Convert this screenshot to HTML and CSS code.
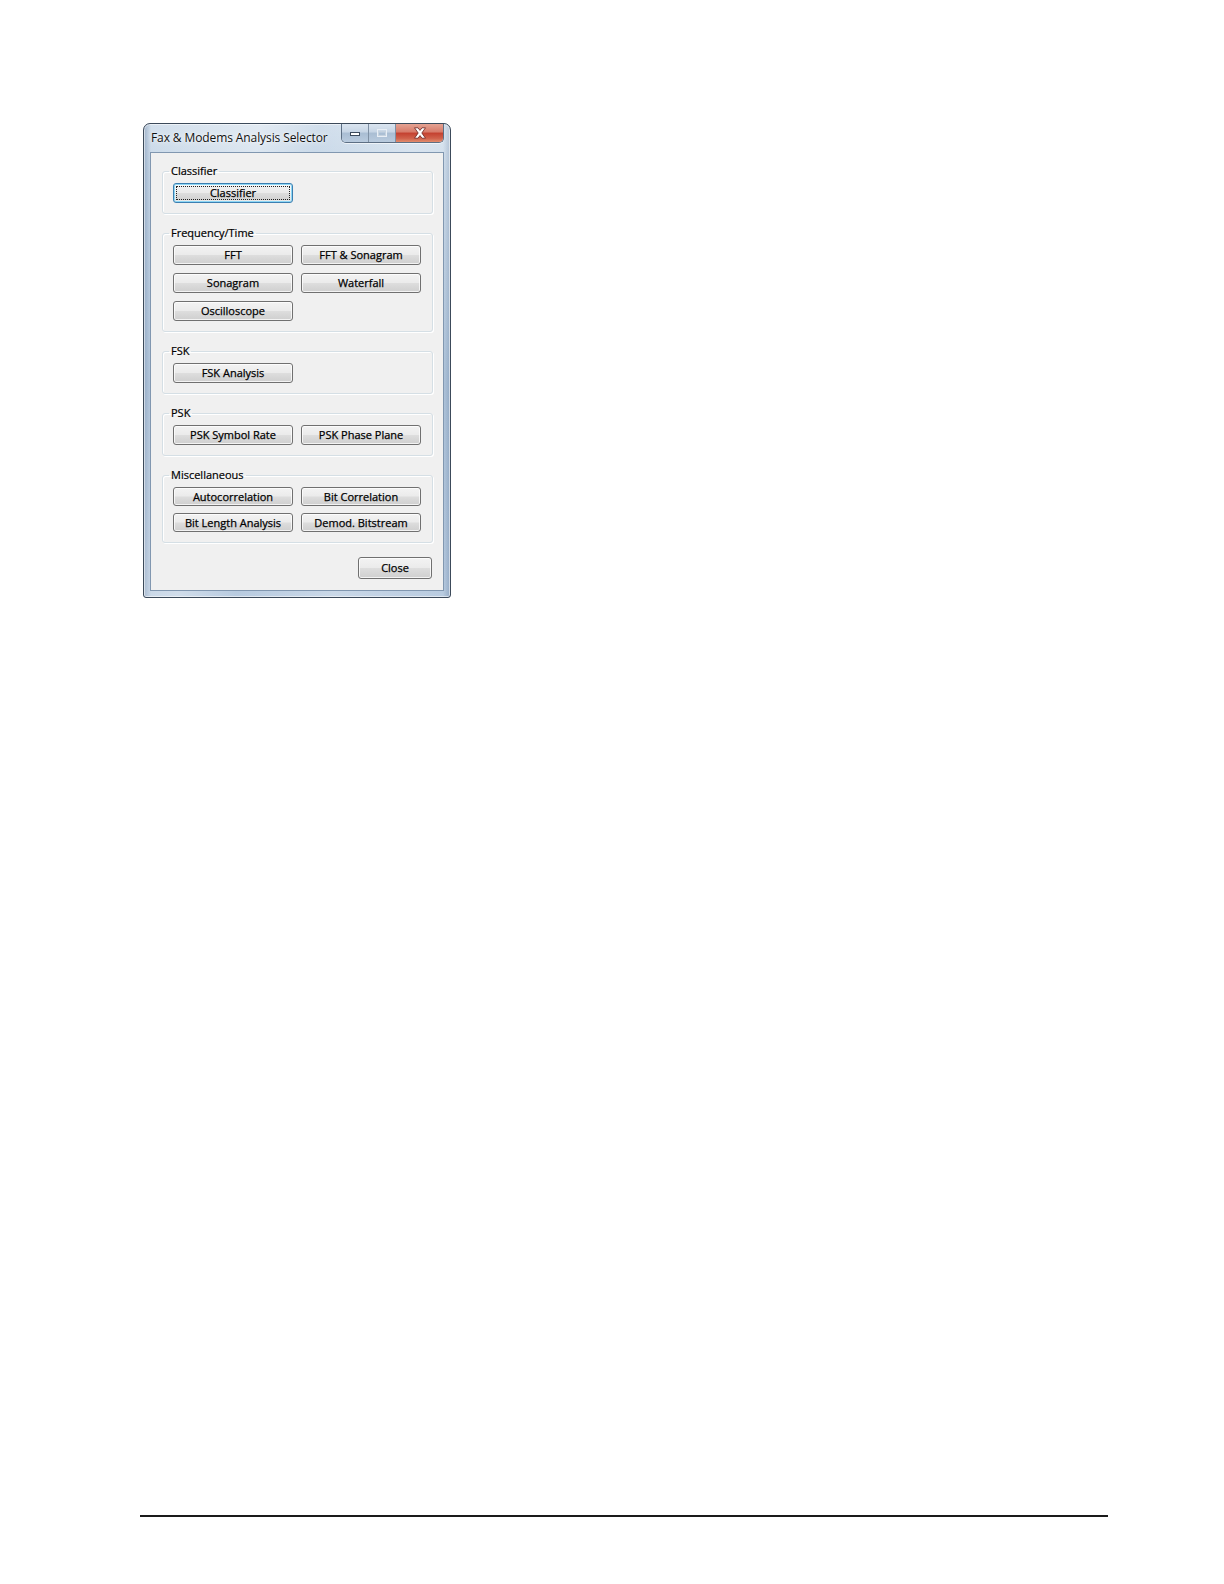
FILE: index.html
```html
<!DOCTYPE html>
<html>
<head>
<meta charset="utf-8">
<title>Fax &amp; Modems Analysis Selector</title>
<link rel="stylesheet" href="styles.css">
</head>
<body>
<div class="page">
  <div class="window">
    <div class="titlebar">
      <span class="title">Fax &amp; Modems Analysis Selector</span>
      <div class="caption">
        <div class="cap cap-min">
          <svg width="12" height="8" viewBox="0 0 12 8"><rect x="1.5" y="3.5" width="9" height="3" fill="#fff" stroke="#3b4a5c" stroke-width="1"/></svg>
        </div>
        <div class="cap cap-max">
          <svg width="12" height="10" viewBox="0 0 12 10"><rect x="1.5" y="1.5" width="9" height="7" fill="none" stroke="#e8eef5" stroke-width="1"/><rect x="2.5" y="3.5" width="7" height="4" fill="none" stroke="#c5d2df" stroke-width="1"/></svg>
        </div>
        <div class="cap cap-close">
          <svg width="14" height="12" viewBox="0 0 14 12"><path d="M1.5 0.8 L5 0.8 L7 3.4 L9 0.8 L12.5 0.8 L8.8 6 L12.5 11.2 L9 11.2 L7 8.6 L5 11.2 L1.5 11.2 L5.2 6 Z" fill="#fff" stroke="#6b2320" stroke-width="0.8" stroke-linejoin="round"/></svg>
        </div>
      </div>
    </div>
    <div class="client">
      <fieldset class="group">
        <legend>Classifier</legend>
        <div class="grid">
          <button class="btn focused">Classifier</button>
        </div>
      </fieldset>
      <fieldset class="group">
        <legend>Frequency/Time</legend>
        <div class="grid">
          <button class="btn">FFT</button>
          <button class="btn">FFT &amp; Sonagram</button>
          <button class="btn">Sonagram</button>
          <button class="btn">Waterfall</button>
          <button class="btn">Oscilloscope</button>
        </div>
      </fieldset>
      <fieldset class="group">
        <legend>FSK</legend>
        <div class="grid">
          <button class="btn">FSK Analysis</button>
        </div>
      </fieldset>
      <fieldset class="group">
        <legend>PSK</legend>
        <div class="grid">
          <button class="btn">PSK Symbol Rate</button>
          <button class="btn">PSK Phase Plane</button>
        </div>
      </fieldset>
      <fieldset class="group">
        <legend>Miscellaneous</legend>
        <div class="grid grid-tight">
          <button class="btn">Autocorrelation</button>
          <button class="btn">Bit Correlation</button>
          <button class="btn">Bit Length Analysis</button>
          <button class="btn">Demod. Bitstream</button>
        </div>
      </fieldset>
      <div class="footer">
        <button class="btn btn-close">Close</button>
      </div>
    </div>
  </div>
  <div class="rule"></div>
</div>
</body>
</html>
```
FILE: styles.css
```css
html, body {
  margin: 0;
  padding: 0;
  background: #ffffff;
}

.page {
  padding-top: 123px;
  height: 1584px;
  box-sizing: border-box;
  font-family: "Open Sans", "Noto Sans", "DejaVu Sans", sans-serif;
}

.window {
  margin-left: 143px;
  width: 308px;
  height: 475px;
  box-sizing: border-box;
  border: 1px solid #3c4a5a;
  border-radius: 7px 7px 3px 3px;
  padding: 0 6px 6px 6px;
  background:
    linear-gradient(100deg, rgba(255,255,255,0) 0%, rgba(255,255,255,0.35) 30%, rgba(255,255,255,0) 45%, rgba(255,255,255,0.25) 70%, rgba(255,255,255,0) 100%),
    linear-gradient(to right, rgba(70,100,140,0.35) 0px, rgba(70,100,140,0) 7px, rgba(70,100,140,0) 299px, rgba(70,100,140,0.3) 306px),
    linear-gradient(to bottom, #d2dfec 0%, #c5d6e7 10%, #a9c0d8 55%, #b8cbe0 100%);
  box-shadow: inset 0 0 0 1px rgba(255,255,255,0.55);
  display: flex;
  flex-direction: column;
}

.titlebar {
  height: 28px;
  display: flex;
  justify-content: space-between;
  align-items: flex-start;
}

.title {
  font-size: 12px;
  line-height: 16px;
  color: #111;
  padding-top: 6px;
  padding-left: 1px;
  letter-spacing: -0.1px;
  text-shadow: 0 0 6px rgba(255,255,255,0.9), 0 0 2px rgba(255,255,255,0.9);
  white-space: nowrap;
}

.caption {
  display: flex;
  height: 18px;
  border: 1px solid #5d6f84;
  border-top: none;
  border-radius: 0 0 5px 5px;
  overflow: hidden;
  box-shadow: 0 1px 0 rgba(255,255,255,0.6);
}

.cap {
  display: flex;
  align-items: center;
  justify-content: center;
  height: 18px;
}

.cap-min, .cap-max {
  width: 26px;
  background: linear-gradient(to bottom, #dbe5f0 0%, #c6d5e5 45%, #a9bdd3 50%, #b9cbde 100%);
  border-right: 1px solid #7f90a4;
}

.cap-close {
  width: 47px;
  background: linear-gradient(to bottom, #e5a393 0%, #d77a69 45%, #c4402f 50%, #d0614b 80%, #e28d6e 100%);
}

.client {
  flex: 1;
  background: #f0f0f0;
  border: 1px solid #8197b0;
  padding: 11px 10px 11px 11px;
  display: flex;
  flex-direction: column;
  gap: 12px;
}

.group {
  margin: 0;
  padding: 5px 10px 10px 10px;
  border: 1px solid #d5dfe5;
  border-radius: 3px;
  box-shadow: inset 1px 1px 0 #ffffff, 1px 1px 0 #ffffff;
  min-width: 0;
}

.group legend {
  font-size: 11px;
  line-height: 14px;
  color: #000;
  padding: 0 2px;
  margin-left: -4px;
  -webkit-text-stroke: 0.2px #000;
}

.grid {
  display: grid;
  grid-template-columns: 120px 120px;
  column-gap: 8px;
  row-gap: 8px;
}

.grid-tight {
  row-gap: 7px;
}

.grid-tight .btn {
  height: 19px;
}

.btn {
  height: 20px;
  margin: 0;
  padding: 0;
  box-sizing: border-box;
  font-family: "Open Sans", "Noto Sans", "DejaVu Sans", sans-serif;
  font-size: 11px;
  line-height: 16px;
  color: #000;
  -webkit-text-stroke: 0.25px #000;
  border: 1px solid #707070;
  border-radius: 3px;
  background: linear-gradient(to bottom, #f3f3f3 0%, #ebebeb 48%, #dddddd 52%, #cfcfcf 100%);
  box-shadow: inset 0 0 0 1px rgba(255,255,255,0.75);
  text-align: center;
  white-space: nowrap;
}

.btn.focused {
  border-color: #3c7fb1;
  box-shadow: inset 0 0 0 1px #8ed7f5, inset 0 0 0 2px rgba(255,255,255,0.5);
  outline: 1px dotted #222;
  outline-offset: -4px;
}

.footer {
  display: flex;
  justify-content: flex-end;
  padding-right: 1px;
  margin-top: 2px;
}

.btn-close {
  width: 74px;
  height: 22px;
}

.rule {
  margin-top: 917px;
  margin-left: 140px;
  width: 968px;
  height: 2px;
  background: #1a1a1a;
}
```
